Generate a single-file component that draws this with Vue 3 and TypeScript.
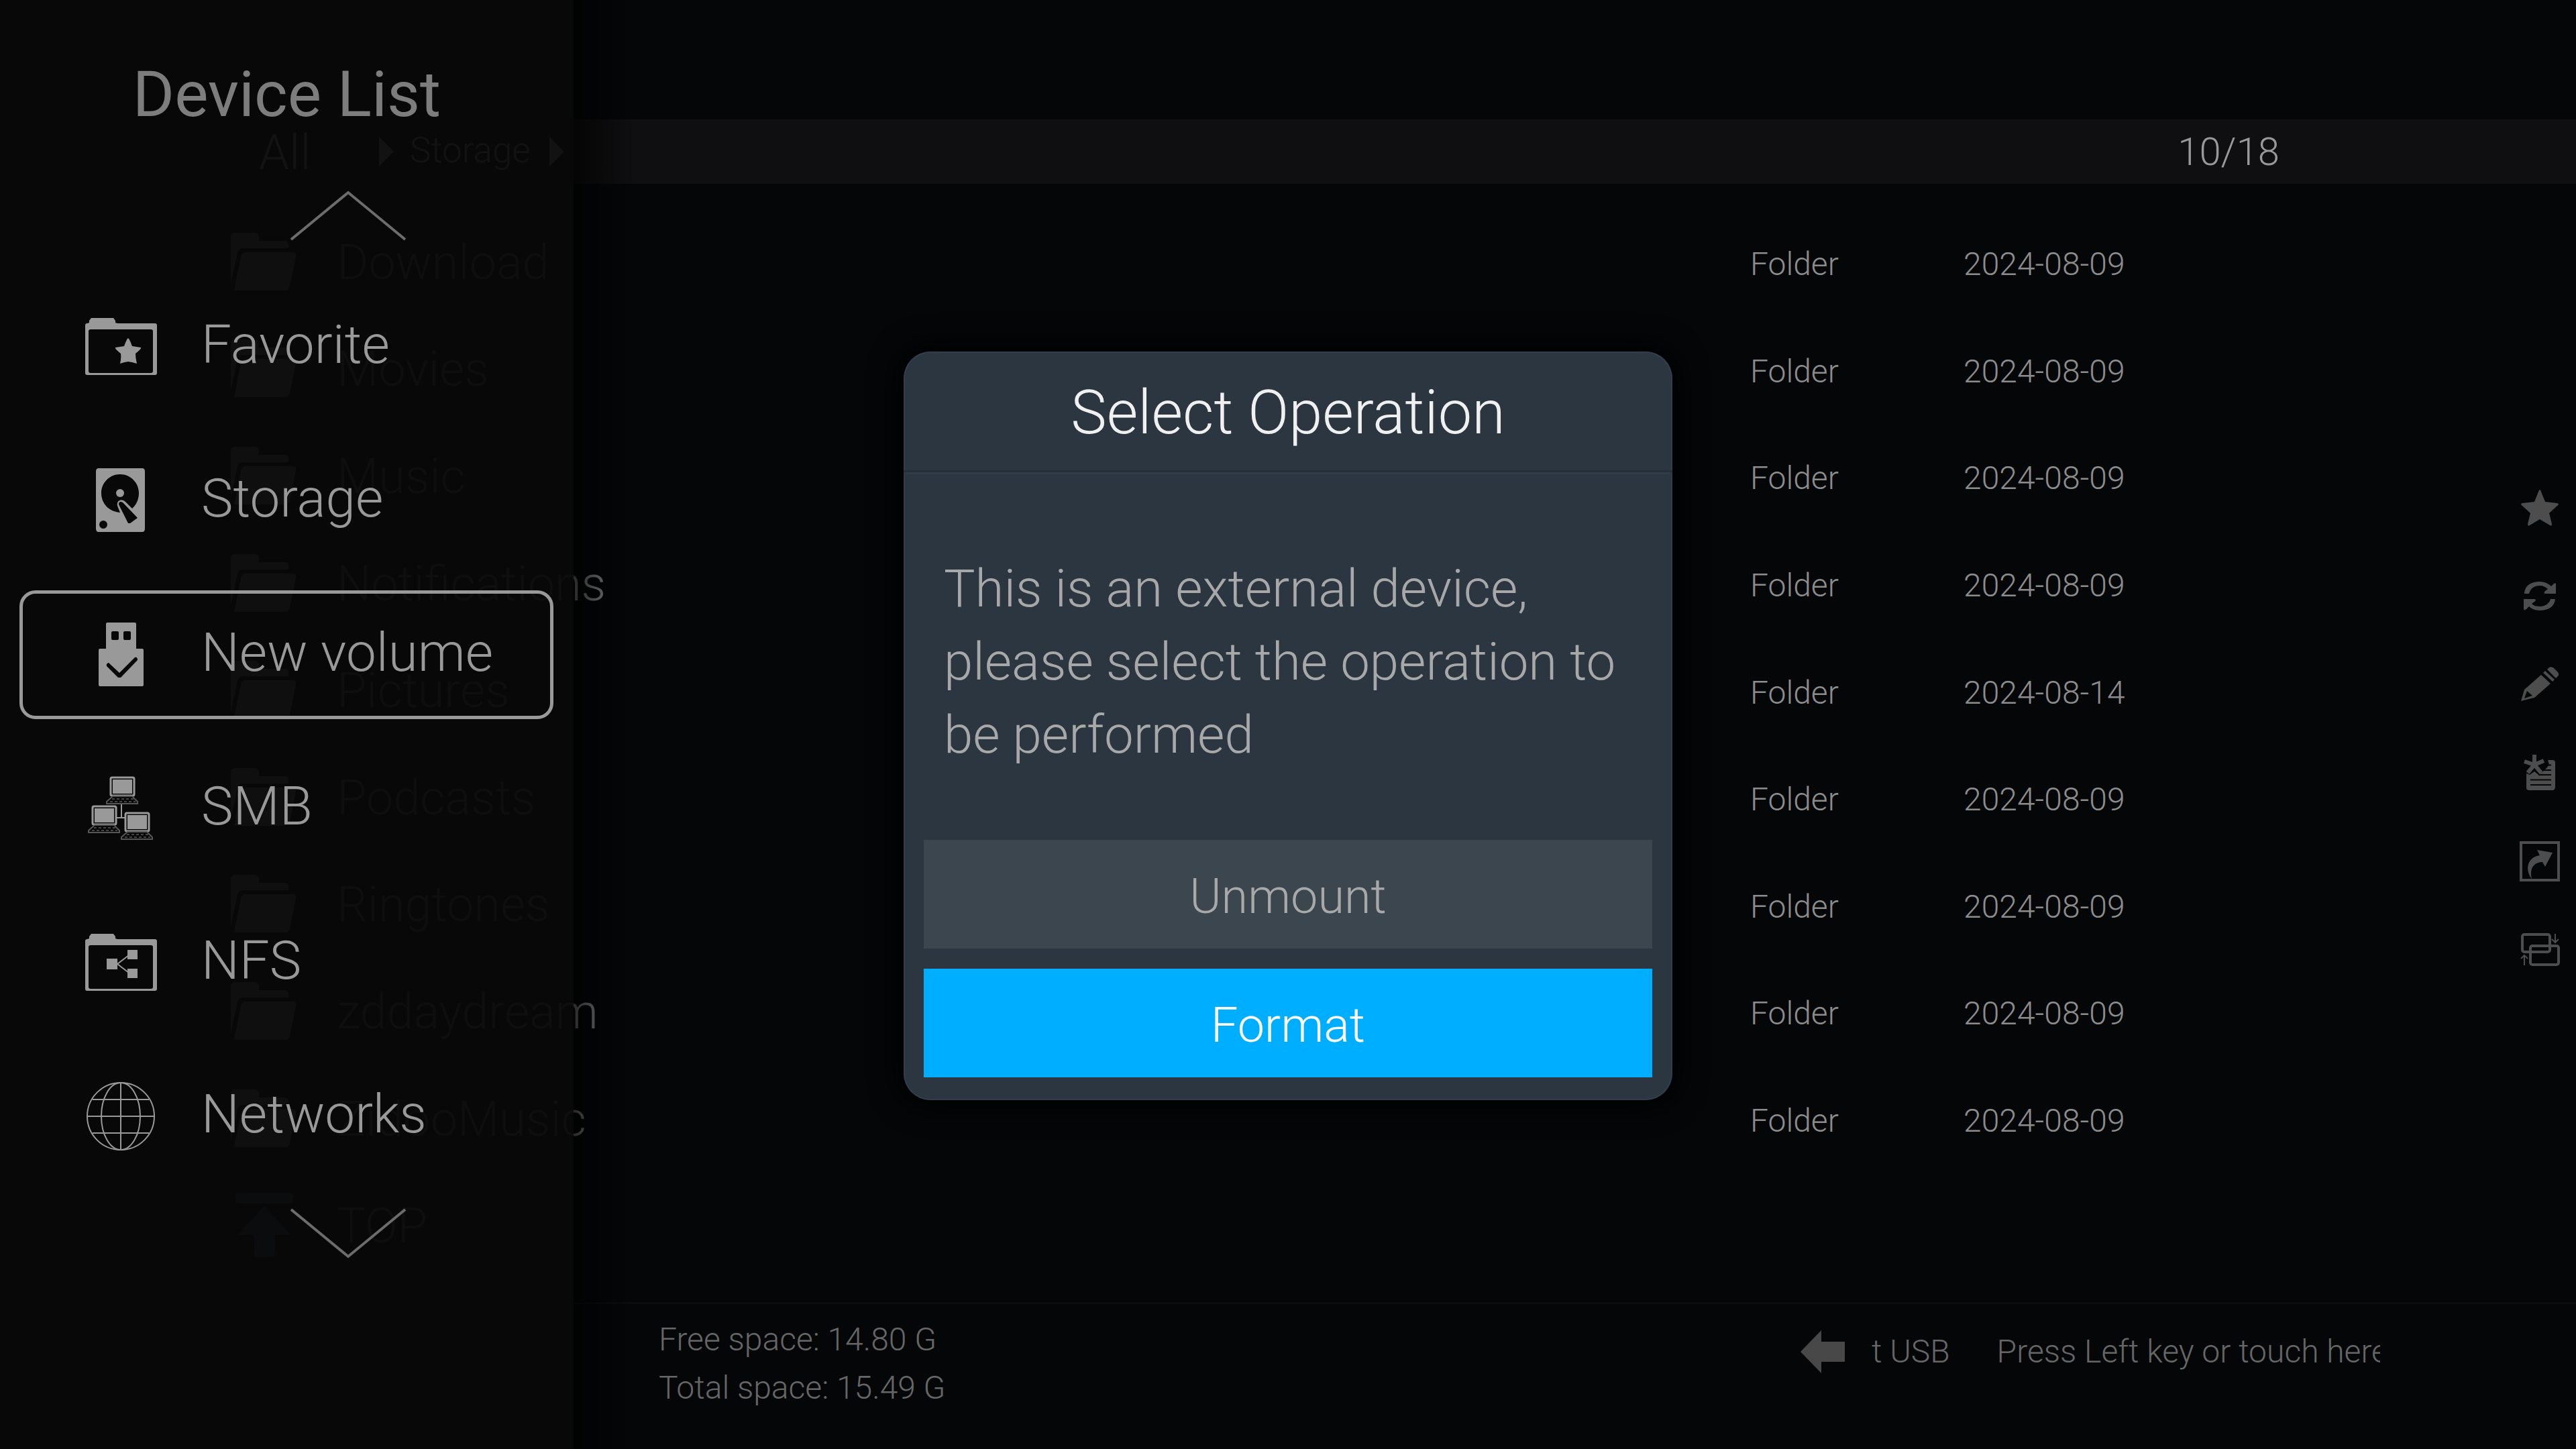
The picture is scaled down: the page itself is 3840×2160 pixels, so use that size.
<script setup lang="ts">
interface Entry {
  name: string
  type: string
  date: string
}

interface Device {
  name: string
  icon: string
}

const entries: Entry[] = [
  { name: 'Download', type: 'Folder', date: '2024-08-09' },
  { name: 'Movies', type: 'Folder', date: '2024-08-09' },
  { name: 'Music', type: 'Folder', date: '2024-08-09' },
  { name: 'Notifications', type: 'Folder', date: '2024-08-09' },
  { name: 'Pictures', type: 'Folder', date: '2024-08-14' },
  { name: 'Podcasts', type: 'Folder', date: '2024-08-09' },
  { name: 'Ringtones', type: 'Folder', date: '2024-08-09' },
  { name: 'zddaydream', type: 'Folder', date: '2024-08-09' },
  { name: 'ZidooMusic', type: 'Folder', date: '2024-08-09' },
  { name: 'TOP', type: '', date: '' },
]

const devices: Device[] = [
  { name: 'Favorite', icon: 'favorite' },
  { name: 'Storage', icon: 'storage' },
  { name: 'New volume', icon: 'usb' },
  { name: 'SMB', icon: 'smb' },
  { name: 'NFS', icon: 'nfs' },
  { name: 'Networks', icon: 'globe' },
]

const selected = 'New volume'

const computers = [
  { x: 38, y: 1 },
  { x: 11, y: 44 },
  { x: 60, y: 54 },
]
</script>

<template>
  <div class="screen">
    <header class="path">
      <nav class="crumbs" aria-label="Path">
        <a href="#" class="crumb-root">All</a>
        <svg class="crumb-arrow" viewBox="0 0 22 44"><path d="M0 0L22 22L0 44Z" /></svg>
        <a href="#" class="crumb">Storage</a>
        <svg class="crumb-arrow" viewBox="0 0 22 44"><path d="M0 0L22 22L0 44Z" /></svg>
      </nav>
      <span class="counter">10/18</span>
    </header>

    <main class="content">
      <table class="files">
        <tbody>
          <tr v-for="entry in entries" :key="entry.name">
            <td class="name">
              <svg v-if="entry.type" class="entry-icon" viewBox="0 0 98 86">
                <path d="M0 76V6Q0 0 6 0H36Q42 0 42 6V12H80Q86 12 86 18V23H18Q12 23 10 30Z" />
                <path d="M22 29H92Q99 29 97 36L88 80Q87 86 81 86H5L15 35Q16 29 22 29Z" />
              </svg>
              <svg v-else class="entry-icon top" viewBox="0 0 98 96">
                <rect x="7" y="0" width="86" height="16" rx="5" />
                <path d="M50 20L90 63H66V90Q66 96 60 96H41Q35 96 35 90V63H10Z" />
              </svg>
              <span>{{ entry.name }}</span>
            </td>
            <td class="type">{{ entry.type }}</td>
            <td class="date">{{ entry.date }}</td>
          </tr>
        </tbody>
      </table>

      <aside class="rail">
        <button type="button" aria-label="Favorite">
          <svg viewBox="0 0 60 60">
            <path d="M30 4Q31 4 32 7L38 22L56 24Q60 25 56 28L44 39L48 55Q48 59 45 57L30 48L15 57Q12 59 12 55L16 39L4 28Q0 25 4 24L22 22L28 7Q29 4 30 4Z" />
          </svg>
        </button>
        <button type="button" aria-label="Refresh">
          <svg viewBox="0 0 60 60">
            <path d="M7 26C8 14 18 9 30 9C37 9 43 12 47 16L51 12Q54 10 54 13V27H38Q35 26 38 23L42 20C39 17 35 15 30 15C22 15 16 19 14 27H7Z" />
            <path d="M53 35C52 47 42 52 30 52C23 52 17 49 14 46L10 50Q6 53 6 49V35H22Q26 36 22 39L18 42C21 45 25 46 30 46C38 46 44 42 46 35Z" />
          </svg>
        </button>
        <button type="button" aria-label="Edit">
          <svg viewBox="0 0 60 60">
            <path fill-rule="evenodd" d="M32 16L46 29L22 50L2 55L7 38ZM11 40L7 51L19 47Z" />
            <path d="M35 13L38 10L52 23L49 26ZM41 8L44 5Q48 3 51 6L57 12Q60 16 56 19L54 21Z" />
          </svg>
        </button>
        <button type="button" aria-label="New file">
          <svg viewBox="0 0 60 60">
            <path d="M10 31L15 33L22 28L28 33L36 27L40 23L44 18L42 11H49Q53 11 53 15V51Q53 56 49 56H14Q10 56 10 52Z" />
            <path class="cut" d="M37 18.500H47M33 26H47M28 33H47M16 40.500H47M16 48H47" />
            <path class="asterisk" d="M22 3V18M7 13L22 18M36 12L22 18L32 30M22 18L12 30" />
          </svg>
        </button>
        <button type="button" aria-label="Share">
          <svg viewBox="0 0 60 60">
            <path class="frame" d="M2 2H58V58H2Z" />
            <path d="M26 13L49 17L38 38L34 31C22 31 14 40 18 56C8 44 10 24 30 21Z" />
          </svg>
        </button>
        <button type="button" aria-label="Move">
          <svg viewBox="0 0 60 60">
            <rect class="line" x="4" y="7" width="41" height="26" rx="3" />
            <rect class="line" x="16" y="24" width="42" height="28" rx="3" />
            <path class="thin" d="M53 6V18M48 14L53 19L58 14M7 53V39M2 43L7 38L12 43" />
          </svg>
        </button>
      </aside>
    </main>

    <footer class="status">
      <div class="space">
        <span>Free space: 14.80 G</span>
        <span>Total space: 15.49 G</span>
      </div>
      <div class="hint">
        <svg class="hint-arrow" viewBox="0 0 66 64"><path d="M0 32L31 0V17H66V47H31V64Z" /></svg>
        <div class="marquee"><span>t USB</span><span>Press Left key or touch here</span></div>
      </div>
    </footer>

    <aside class="drawer">
      <h1>Device List</h1>
      <svg class="chevron" viewBox="0 0 176 76"><path d="M3 73L88 3L173 73" /></svg>
      <ul class="devices">
        <li v-for="device in devices" :key="device.name">
          <button type="button" class="device" :class="{ selected: device.name === selected }">
            <svg class="device-icon" viewBox="0 0 108 96">
              <template v-if="device.icon === 'favorite' || device.icon === 'nfs'">
                <path
                  fill-rule="evenodd"
                  d="M1 16Q1 13 4 13L7 12V9L10 5H43L46 9V12L49 13H105Q108 13 108 16V87Q108 90 105 90H4Q1 90 1 87ZM6 25V84Q6 87 9 87H99Q102 87 102 84V25Q102 22 99 22H9Q6 22 6 25Z"
                />
                <path
                  v-if="device.icon === 'favorite'"
                  d="M65 35Q67 36 71 47L84 49Q85 51 76 58Q76 65 78 73Q72 71 65 70Q58 71 53 73Q55 65 54 58Q45 51 46 49L59 47Q63 36 65 35Z"
                />
                <template v-else>
                  <path d="M33 42H49V58H33ZM64 29H79V43H64ZM64 57H79V71H64Z" />
                  <path class="net" d="M66 37L49 50L66 63" />
                </template>
              </template>
              <template v-else-if="device.icon === 'storage'">
                <path
                  fill-rule="evenodd"
                  d="M21 0H86Q90 0 90 5V90Q90 95 86 95H21Q17 95 17 90V5Q17 0 21 0ZM53 9C37 9 25 22 25 37C25 53 37 65 53 66L49 56Q48 50 52 48Q57 46 61 50L71 60C78 54 81 45 81 37C81 22 69 9 53 9ZM28 78A6 6 0 1 0 28 90A6 6 0 1 0 28 78ZM51 54L65 82H68L79 74L57 51Q51 48 51 54Z"
                />
                <circle cx="53" cy="37" r="6" />
              </template>
              <path
                v-else-if="device.icon === 'usb'"
                fill-rule="evenodd"
                d="M34 0H75Q77 0 77 2V39H86Q88 39 88 41V93Q88 95 86 95H23Q21 95 21 93V41Q21 39 23 39H32V2Q32 0 34 0ZM42 13Q40 13 40 15V24Q40 26 42 26H49Q51 26 51 24V15Q51 13 49 13ZM60 13Q58 13 58 15V24Q58 26 60 26H67Q69 26 69 24V15Q69 13 67 13ZM36 60Q32 61 33 65L50 82H54L79 56Q79 51 75 52L52 75Z"
              />
              <template v-else-if="device.icon === 'smb'">
                <path class="net" d="M55 42V62M48 62H60" />
                <g v-for="pc in computers" :key="pc.x" :transform="`translate(${pc.x} ${pc.y})`">
                  <rect class="screen-frame" x="1" y="1" width="35" height="27" rx="2" />
                  <rect x="4" y="4" width="29" height="21" />
                  <path class="keys" d="M4 29H33L41 37V40H-5V37Z" />
                  <path class="key-row" d="M3 33H35M0 37H38" />
                </g>
              </template>
              <g v-else class="globe">
                <circle cx="54" cy="48" r="50" />
                <ellipse cx="54" cy="48" rx="29" ry="50" />
                <path d="M54 -2V98M4 48H104M12 23H96M12 73H96" />
              </g>
            </svg>
            <span>{{ device.name }}</span>
          </button>
        </li>
      </ul>
      <svg class="chevron" viewBox="0 0 176 76"><path d="M3 3L88 73L173 3" /></svg>
    </aside>

    <div class="overlay">
      <section class="dialog" role="dialog" aria-labelledby="dialog-title">
        <h2 id="dialog-title">Select Operation</h2>
        <p>This is an external device, please select the operation to be performed</p>
        <div class="actions">
          <button type="button">Unmount</button>
          <button type="button" class="primary">Format</button>
        </div>
      </section>
    </div>
  </div>
</template>

<style>
body {
  background: #040608;
}
</style>

<style scoped>
.screen {
  position: relative;
  display: flex;
  flex-direction: column;
  box-sizing: border-box;
  min-height: 100vh;
  padding-top: 178px;
  overflow: hidden;
  background: #040608;
  color: #8c8c8c;
  font-family: Roboto, "Liberation Sans", sans-serif;
  font-weight: 300;
}

button {
  margin: 0;
  padding: 0;
  border: 0;
  background: none;
  color: inherit;
  font: inherit;
}

svg {
  display: block;
  flex: none;
  overflow: visible;
  fill: currentColor;
}

.path {
  display: flex;
  align-items: center;
  justify-content: space-between;
  height: 96px;
  padding: 0 442px 0 386px;
  background: #0f0f11;
  color: #999999;
  font-size: 58px;
}

.crumbs {
  display: flex;
  align-items: center;
  color: #f0f0f0;
}

.crumbs a {
  color: inherit;
  text-decoration: none;
}

.crumb-root {
  width: 179px;
  padding-top: 2px;
  font-size: 72px;
}

.crumb {
  width: 208px;
  margin-left: 24px;
  padding-bottom: 4px;
  font-size: 53px;
}

.crumb-arrow {
  width: 22px;
  height: 44px;
}

.content {
  display: flex;
  flex: 1;
}

.files {
  display: flex;
  flex: 1;
  padding: 36px 0 35px 344px;
}

.files tbody {
  display: flex;
  flex: 1;
  flex-direction: column;
}

.files tr {
  display: flex;
  flex: 1;
  align-items: center;
}

.files td {
  padding: 0;
}

.files .name {
  display: flex;
  flex: 1;
  align-items: center;
  gap: 60px;
  font-size: 72px;
  line-height: 84px;
}

.files .name span {
  padding-top: 4px;
}

.entry-icon {
  width: 98px;
  height: 86px;
  color: #a8a8a8;
}

.entry-icon.top {
  height: 96px;
  color: #4a6480;
}

.files .type,
.files .date {
  padding-top: 8px;
  font-size: 48px;
}

.files .type {
  width: 318px;
}

.files .date {
  width: 829px;
}

.rail {
  display: flex;
  flex-direction: column;
  justify-content: center;
  gap: 72px;
  padding: 0 24px 44px 0;
  color: #4d4d4d;
}

.rail svg {
  width: 60px;
  height: 60px;
}

.rail .frame,
.rail .line,
.rail .thin,
.rail .asterisk {
  fill: none;
  stroke: currentColor;
  stroke-width: 4px;
}

.rail .thin {
  stroke-width: 2px;
}

.rail .asterisk {
  stroke-width: 6px;
}

.rail .cut {
  fill: none;
  stroke: #040608;
  stroke-width: 2px;
}

.status {
  display: flex;
  align-items: flex-start;
  justify-content: space-between;
  box-sizing: border-box;
  height: 219px;
  padding: 17px 292px 0 982px;
  border-top: 3px solid #0a0c0e;
  color: #666666;
  font-size: 48px;
  line-height: 72px;
}

.space {
  display: flex;
  flex-direction: column;
}

.hint {
  display: flex;
  align-items: center;
  gap: 40px;
  padding-top: 18px;
}

.hint-arrow {
  width: 66px;
  height: 64px;
  color: #484848;
}

.marquee {
  display: flex;
  gap: 70px;
  width: 758px;
  overflow: hidden;
  white-space: nowrap;
}

.drawer {
  position: absolute;
  top: 0;
  bottom: 0;
  left: 0;
  display: flex;
  flex-direction: column;
  align-items: center;
  box-sizing: border-box;
  width: 855px;
  padding: 82px 0 284px;
  background: rgba(8, 8, 8, 0.96);
  color: #999999;
}

.drawer::after {
  position: absolute;
  top: 0;
  bottom: 0;
  left: 100%;
  width: 90px;
  background: linear-gradient(to right, rgba(0, 0, 0, 0.7), rgba(0, 0, 0, 0));
  content: "";
}

.drawer h1 {
  margin: 0;
  color: #7d7d7d;
  font-size: 95px;
  font-weight: 400;
  line-height: 118px;
}

.chevron {
  width: 176px;
  height: 76px;
  margin: 84px 0 0 182px;
  fill: none;
  stroke: #6c6c6c;
  stroke-width: 4px;
}

.devices + .chevron {
  margin-top: 40px;
}

.devices {
  display: flex;
  flex: 1;
  flex-direction: column;
  align-self: stretch;
  justify-content: space-between;
  margin: 0;
  padding: 61px 30px 0 29px;
  list-style: none;
}

.device {
  display: flex;
  align-items: center;
  gap: 66px;
  box-sizing: border-box;
  width: 100%;
  height: 192px;
  padding-left: 92px;
  border: 5px solid transparent;
  border-radius: 24px;
  font-size: 80px;
  line-height: 94px;
}

.device.selected {
  border-color: #999999;
}

.device span {
  padding-bottom: 6px;
}

.device-icon {
  width: 108px;
  height: 96px;
}

.net,
.screen-frame,
.globe {
  fill: none;
  stroke: currentColor;
  stroke-width: 2px;
}

.screen-frame {
  stroke-width: 3px;
}

.keys {
  fill: none;
  stroke: #555555;
  stroke-width: 2px;
}

.key-row {
  fill: none;
  stroke: #444444;
  stroke-dasharray: 4px 3px;
  stroke-width: 2px;
}

.overlay {
  position: absolute;
  inset: 0;
  display: flex;
  align-items: center;
  justify-content: center;
  padding-top: 4px;
}

.dialog {
  box-sizing: border-box;
  width: 1146px;
  padding-bottom: 34px;
  overflow: hidden;
  border-radius: 40px;
  background: #2b3641;
  box-shadow: 0 0 40px 10px #000000, inset 0 0 0 2px #323f4b;
  color: #a8a8a8;
}

.dialog h2 {
  margin: 0;
  padding: 39px 0 32px;
  border-bottom: 3px solid #252f39;
  color: #f0f0f0;
  font-size: 90px;
  font-weight: 300;
  line-height: 106px;
  text-align: center;
}

.dialog p {
  margin: 0;
  padding: 116px 60px 102px;
  border-top: 3px solid #303d49;
  font-size: 78px;
  line-height: 109px;
}

.actions {
  display: flex;
  flex-direction: column;
  gap: 30px;
  padding: 0 30px;
}

.actions button {
  box-sizing: border-box;
  height: 162px;
  padding-top: 6px;
  background: #3c464f;
  font-size: 72px;
}

.actions .primary {
  background: #00aeff;
  color: #ffffff;
}
</style>
